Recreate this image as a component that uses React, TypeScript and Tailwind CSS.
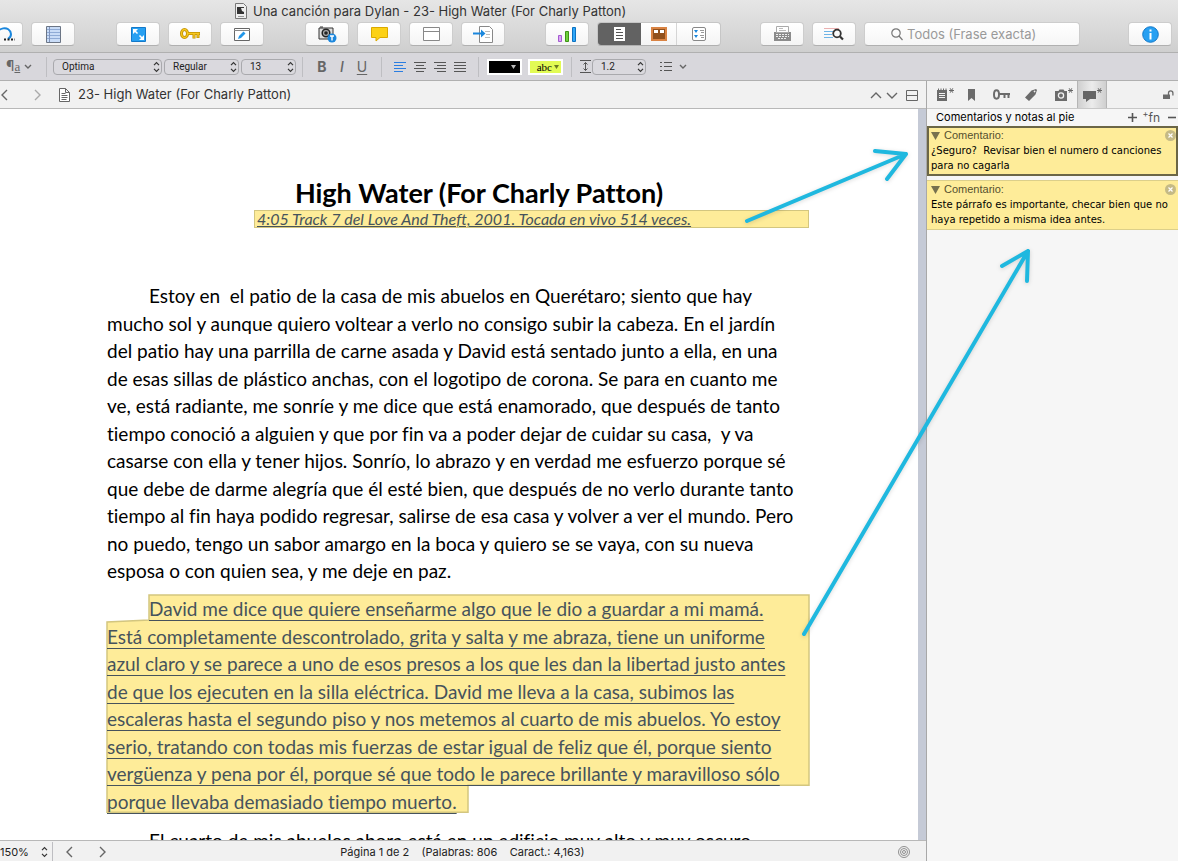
import type { ReactNode } from "react";

const ui = "font-['Inter',sans-serif]";
const body = "font-['Lato',sans-serif]";

interface ToolButtonProps {
  label: string;
  className?: string;
  children: ReactNode;
}

const ToolButton = ({ label, className = "", children }: ToolButtonProps) => {
  return (
    <button
      type="button"
      aria-label={label}
      className={`flex h-6 w-11 shrink-0 items-center justify-center rounded border border-[#cdcdcd] border-b-[#b0b0b0] bg-linear-to-b from-white to-[#f4f4f4] ${className}`}
    >
      {children}
    </button>
  );
};

interface PickerProps {
  label: string;
  value: string;
  className: string;
}

const Picker = ({ label, value, className }: PickerProps) => {
  return (
    <div className={`relative h-4 shrink-0 ${className}`}>
      <select
        aria-label={label}
        defaultValue={value}
        className="block h-4 w-full appearance-none rounded border border-[#a9a9ad] bg-[#dad9de] pl-2 font-['Roboto',sans-serif] text-[10px] leading-3 text-[#222]"
      >
        <option>{value}</option>
      </select>
      <Stepper className="pointer-events-none absolute top-0.5 right-0.5" />
    </div>
  );
};

const Stepper = ({ className = "" }: { className?: string }) => (
  <svg className={className} width="7" height="12" viewBox="0 0 7 12" fill="none" stroke="#333" strokeWidth="1.2">
    <path d="M1 4.2 3.5 1.7 6 4.2M1 7.8 3.5 10.3 6 7.8" />
  </svg>
);

const Chevron = ({ d, w = 9, h = 14, color = "#666" }: { d: string; w?: number; h?: number; color?: string }) => (
  <svg width={w} height={h} viewBox={`0 0 ${w} ${h}`} fill="none" stroke={color} strokeWidth="1.4">
    <path d={d} />
  </svg>
);

const Toolbar = () => {
  return (
    <div className="flex items-center overflow-hidden pr-1.5">
      <div className="-ml-[21px] flex gap-2">
        <ToolButton label="Ver">
          <svg width="36" height="18" viewBox="0 0 36 18" fill="none">
            <path d="M13 12c0-10 14-12 15-3 0 3-1 4-3 5" stroke="#1b87dd" strokeWidth="2" />
            <path d="M21 14.500h11" stroke="#222" strokeWidth="2" strokeDasharray="2 1.500" />
          </svg>
        </ToolButton>
        <ToolButton label="Carpeta">
          <svg width="15" height="17" viewBox="0 0 15 17">
            <path d="M.5.5h14v16H.5z" fill="#c9dcf7" stroke="#6b7585" />
            <path d="M1 3.500h13M1 6.500h13M1 9.500h13M1 12.500h13" stroke="#8fabd6" />
            <path d="M3.500 1v15" stroke="#8095bd" />
          </svg>
        </ToolButton>
      </div>
      <div className="ml-[41px] flex gap-2">
        <ToolButton label="Pantalla completa">
          <svg width="15" height="15" viewBox="0 0 15 15">
            <path d="M.5.5h14v14H.5z" fill="#27a0f2" stroke="#1479c9" />
            <path d="m4 4 2.500 2.500M8.500 8.500 11 11" stroke="#fff" strokeWidth="1.500" />
            <path d="M2 2h5L2 7zM13 13H8l5-5z" fill="#fff" />
          </svg>
        </ToolButton>
        <ToolButton label="Palabras clave">
          <svg width="20" height="12" viewBox="0 0 20 12" fill="none">
            <g stroke="#c08f00" strokeWidth="3">
              <ellipse cx="4.500" cy="5.500" rx="3" ry="4" />
              <path d="M7.500 5.500H20M14 6v4.500M18 6v4" />
            </g>
            <g stroke="#f7c81e" strokeWidth="1.300">
              <ellipse cx="4.500" cy="5.500" rx="3" ry="4" />
              <path d="M8 5.500h11.500M14 6v4M18 6v3.500" />
            </g>
          </svg>
        </ToolButton>
        <ToolButton label="Editar">
          <svg width="17" height="15" viewBox="0 0 17 15">
            <path d="M.5 1.500h15v12H.5z" fill="#fff" stroke="#666" />
            <path d="M0 3.500h16" stroke="#888" />
            <path d="m4 12 1-3 4.500-4.500 2 2L7 11z" fill="#2196e8" />
          </svg>
        </ToolButton>
      </div>
      <div className="ml-[41px] flex gap-2">
        <ToolButton label="Instantánea">
          <svg width="19" height="17" viewBox="0 0 19 17">
            <path d="M1 2h14v11H1z" fill="#ddd" stroke="#333" />
            <path d="M2 1h3" stroke="#333" />
            <circle cx="8" cy="7" r="3.800" fill="#aaa" stroke="#222" strokeWidth="1.500" />
            <circle cx="8" cy="7" r="1.800" fill="#222" />
            <circle cx="14" cy="12" r="4.500" fill="#1b87dd" />
            <path d="M12 10h4M14 10v4.500" stroke="#fff" strokeWidth="1.400" />
          </svg>
        </ToolButton>
        <ToolButton label="Comentario">
          <svg width="17" height="16" viewBox="0 0 17 16">
            <path d="M.5 1.500h16v10H9L5 15v-3.500H.5z" fill="#fcd116" stroke="#dba900" />
          </svg>
        </ToolButton>
        <ToolButton label="Ventana">
          <svg width="17" height="15" viewBox="0 0 17 15">
            <path d="M.5.5h16v13H.5z" fill="#fff" stroke="#888" />
            <path d="M0 4.500h17" stroke="#888" />
          </svg>
        </ToolButton>
        <ToolButton label="Importar">
          <svg width="20" height="17" viewBox="0 0 20 17">
            <path d="M6.500.5h10l3 3v13h-13z" fill="#fff" stroke="#888" />
            <path d="M12 5.500h5M13 8.500h4M12 11.500h5" stroke="#bbb" />
            <path d="M0 7.500h10" stroke="#1b87dd" strokeWidth="2" />
            <path d="m8 3.500 4.500 4-4.500 4z" fill="#1b87dd" />
          </svg>
        </ToolButton>
      </div>
      <div className="ml-10 flex gap-2">
        <ToolButton label="Estadísticas">
          <svg width="19" height="15" viewBox="0 0 19 15">
            <path d="M.5 8.500h3v6h-3z" fill="#dba6f5" stroke="#a45bd0" />
            <path d="M7.500 4.500h3v10h-3z" fill="#6fcf3c" stroke="#3d9414" />
            <path d="M14.500.5h3v14h-3z" fill="#2fa6f7" stroke="#0c72c2" />
          </svg>
        </ToolButton>
        <div className="flex w-[124px] shrink-0 overflow-hidden rounded border border-[#c6c6c6] border-b-[#b0b0b0] bg-linear-to-b from-white to-[#f4f4f4]">
          <button type="button" aria-label="Documento" className="flex w-[43px] items-center justify-center bg-[#626262]">
            <svg width="11" height="14" viewBox="0 0 11 14">
              <path d="M0 0h11v14H0z" fill="#fff" />
              <path d="M2 2.500h5M2 5.500h7M2 8.500h7M2 11.500h7" stroke="#555" />
            </svg>
          </button>
          <button type="button" aria-label="Corcho" className="flex w-9 items-center justify-center border-r border-[#d5d5d5]">
            <svg width="16" height="14" viewBox="0 0 16 14">
              <path d="M1 1h14v12H1z" fill="#91501c" stroke="#d98343" strokeWidth="2" />
              <path d="M3 3h4v3H3zM9 3h4v3H9z" fill="#fff" />
            </svg>
          </button>
          <button type="button" aria-label="Esquema" className="flex flex-1 items-center justify-center">
            <svg width="14" height="14" viewBox="0 0 14 14">
              <rect x=".5" y=".5" width="13" height="13" rx="1.500" fill="#fff" stroke="#888" />
              <path d="M2 3h4L4 6zM2 8h4l-2 3z" fill="#1b87dd" />
              <path d="M8 3.500h4M9 5.500h3M8 8.500h4M9 10.500h3" stroke="#999" />
            </svg>
          </button>
        </div>
      </div>
      <div className="ml-[39px] flex gap-2">
        <ToolButton label="Imprimir">
          <svg width="17" height="16" viewBox="0 0 17 16">
            <path d="M0 6h17v9H0z" fill="#8b8b8b" />
            <path d="M2.500.5h12v6h-12z" fill="#fff" stroke="#aaa" />
            <path d="M5 2.500h4M5 4.500h7" stroke="#bbb" />
            <path d="M2 8.500h13M2 10.500h13M4 12.500h9" stroke="#eee" strokeDasharray="2 1" />
          </svg>
        </ToolButton>
        <ToolButton label="Buscar en proyecto">
          <svg width="20" height="14" viewBox="0 0 20 14" fill="none">
            <path d="M0 1.500h15" stroke="#eab0b0" />
            <path d="M0 4.500h9M0 7.500h8M0 10.500h9" stroke="#6fb4e6" />
            <g stroke="#333">
              <circle cx="13" cy="6.500" r="3.800" strokeWidth="1.800" />
              <path d="m16 9.500 3 3" strokeWidth="2.200" />
            </g>
          </svg>
        </ToolButton>
      </div>
      <div className="ml-2 flex h-6 min-w-0 flex-1 items-center gap-1 rounded border border-[#cdcdcd] border-b-[#b0b0b0] bg-linear-to-b from-white to-[#f6f6f6] pl-[26px]">
        <svg width="12" height="13" viewBox="0 0 12 13" fill="none" stroke="#777" strokeWidth="1.200">
          <circle cx="5" cy="5" r="4.200" />
          <path d="m8 8 3.500 4" />
        </svg>
        <input
          type="search"
          aria-label="Buscar"
          placeholder="Todos (Frase exacta)"
          className="min-w-0 flex-1 text-[13px] leading-4 outline-none placeholder:text-[#999]"
        />
      </div>
      <ToolButton label="Inspector" className="ml-12">
        <svg width="17" height="17" viewBox="0 0 17 17">
          <circle cx="8.500" cy="8.500" r="7.800" fill="#27a0f2" stroke="#1479c9" />
          <path d="M8.500 3.500v2M8.500 7v6.500" stroke="#fff" strokeWidth="2" />
        </svg>
      </ToolButton>
    </div>
  );
};

const alignments = [
  { label: "Izquierda", d: "M0 .5h12M0 3.500h9M0 6.500h12M0 9.500h9", color: "#2a7de1" },
  { label: "Centro", d: "M0 .5h12M2 3.500h8M0 6.500h12M2 9.500h8", color: "#555" },
  { label: "Derecha", d: "M0 .5h12M3 3.500h9M0 6.500h12M3 9.500h9", color: "#555" },
  { label: "Justificado", d: "M0 .5h12M0 3.500h12M0 6.500h12M0 9.500h12", color: "#555" },
];

const Divider = ({ className = "" }: { className?: string }) => (
  <div className={`h-5 w-px shrink-0 bg-[#bebec2] ${className}`} />
);

const FormatBar = () => {
  return (
    <div className="flex h-[29px] shrink-0 items-center border-y border-[#b0b0b0] bg-[#d8d7dc] pl-1.5 text-[#666]">
      <button type="button" aria-label="Estilos" className="flex w-7 shrink-0 items-center gap-1 text-sm leading-4">
        <span>¶<span className="font-['Liberation_Serif',serif] text-[13px] underline">a</span></span>
        <Chevron d="M1 2l3 3 3-3" w={8} h={7} />
      </button>
      <Divider className="mx-3 mr-1.5" />
      <Picker label="Fuente" value="Optima" className="w-[109px]" />
      <Picker label="Variante" value="Regular" className="ml-0.5 w-[75px]" />
      <Picker label="Tamaño" value="13" className="ml-0.5 w-[55px]" />
      <Divider className="ml-1.5" />
      <div className="flex w-[78px] shrink-0 items-center justify-center text-sm leading-4">
        <button type="button" className="w-5 font-bold">B</button>
        <button type="button" className="w-5 font-medium italic">I</button>
        <button type="button" className="w-5 underline underline-offset-2">U</button>
      </div>
      <Divider />
      <div className="flex w-24 shrink-0 items-center justify-center gap-2">
        {alignments.map((a) => (
          <button key={a.label} type="button" aria-label={a.label}>
            <svg width="12" height="10" viewBox="0 0 12 10" stroke={a.color}>
              <path d={a.d} />
            </svg>
          </button>
        ))}
      </div>
      <Divider />
      <button type="button" aria-label="Color de texto" className="ml-2 flex h-4 w-[35px] shrink-0 items-center justify-end border-2 border-white bg-black pr-1">
        <svg width="5" height="4" viewBox="0 0 5 4" fill="#bbb"><path d="M0 0h5L2.500 4z" /></svg>
      </button>
      <button type="button" className="ml-1.5 flex h-4 w-[35px] shrink-0 items-center justify-end gap-0.5 border-2 border-white bg-[#e2fb54] pr-0.5 font-['Liberation_Serif',serif] text-[11px] leading-3 text-black">
        abc
        <svg width="5" height="4" viewBox="0 0 5 4" fill="#6c7a20"><path d="M0 0h5L2.500 4z" /></svg>
      </button>
      <Divider className="ml-2" />
      <svg className="ml-2 shrink-0" width="11" height="13" viewBox="0 0 11 13" fill="none" stroke="#555">
        <path d="M0 .5h11M0 12.500h11M5.500 2.500v8M3.500 4.500l2-2 2 2M3.500 8.500l2 2 2-2" />
      </svg>
      <Picker label="Interlineado" value="1.2" className="ml-px w-[54px]" />
      <button type="button" aria-label="Lista" className="ml-3.5 flex items-center gap-1.5">
        <svg width="13" height="11" viewBox="0 0 13 11" stroke="#555">
          <path d="M0 1.500h2M0 5.500h2M0 9.500h2M4 1.500h8M4 5.500h8M4 9.500h8" />
        </svg>
        <Chevron d="M1 2l3 3 3-3" w={8} h={7} />
      </button>
    </div>
  );
};

const firstParagraph = [
  "Estoy en  el patio de la casa de mis abuelos en Querétaro; siento que hay",
  "mucho sol y aunque quiero voltear a verlo no consigo subir la cabeza. En el jardín",
  "del patio hay una parrilla de carne asada y David está sentado junto a ella, en una",
  "de esas sillas de plástico anchas, con el logotipo de corona. Se para en cuanto me",
  "ve, está radiante, me sonríe y me dice que está enamorado, que después de tanto",
  "tiempo conoció a alguien y que por fin va a poder dejar de cuidar su casa,  y va",
  "casarse con ella y tener hijos. Sonrío, lo abrazo y en verdad me esfuerzo porque sé",
  "que debe de darme alegría que él esté bien, que después de no verlo durante tanto",
  "tiempo al fin haya podido regresar, salirse de esa casa y volver a ver el mundo. Pero",
  "no puedo, tengo un sabor amargo en la boca y quiero se se vaya, con su nueva",
  "esposa o con quien sea, y me deje en paz.",
];

const secondParagraph = [
  "David me dice que quiere enseñarme algo que le dio a guardar a mi mamá.",
  "Está completamente descontrolado, grita y salta y me abraza, tiene un uniforme",
  "azul claro y se parece a uno de esos presos a los que les dan la libertad justo antes",
  "de que los ejecuten en la silla eléctrica. David me lleva a la casa, subimos las",
  "escaleras hasta el segundo piso y nos metemos al cuarto de mis abuelos. Yo estoy",
  "serio, tratando con todas mis fuerzas de estar igual de feliz que él, porque siento",
  "vergüenza y pena por él, porque sé que todo le parece brillante y maravilloso sólo",
  "porque llevaba demasiado tiempo muerto.",
];

const Page = () => {
  return (
    <main className="min-h-0 flex-1 overflow-hidden border-r-8 border-[#c5cad6] bg-white">
      <article className={`ml-[107px] w-[702px] pt-[66px] text-[19px] leading-[1.45] text-black [font-variant-ligatures:none] ${body}`}>
        <h1 className="pl-[42px] text-center text-[27px] leading-[35px] font-bold whitespace-nowrap">
          High Water (For Charly Patton)
        </h1>
        <p className="ml-[147px] h-[18px] border border-[#d3c67f] bg-[#feec99] pl-0.5 text-base leading-4 whitespace-nowrap text-[#46535c] italic underline decoration-1">
          4:05 Track 7 del Love And Theft, 2001. Tocada en vivo 514 veces.
        </p>
        <p className="mt-[54px] indent-[42px] whitespace-pre">{firstParagraph.join("\n")}</p>
        <div className="relative mt-2.5">
          <svg className="absolute inset-0 h-full w-full overflow-visible" viewBox="0 0 702 220" preserveAspectRatio="none">
            <path d="M42 0H702V190H361V217H0V27L42 25Z" fill="#feec99" stroke="#d3c67f" strokeWidth="1.500" />
          </svg>
          <p className="relative indent-[42px] whitespace-pre text-[#46535c] underline decoration-1 underline-offset-4">
            {secondParagraph.join("\n")}
          </p>
        </div>
        <p className="mt-3 indent-[42px] whitespace-pre">
          El cuarto de mis abuelos ahora está en un edificio muy alto y muy oscuro
        </p>
      </article>
    </main>
  );
};

const Editor = () => {
  return (
    <section className="flex min-w-0 flex-1 flex-col">
      <header className="flex h-7 shrink-0 items-center border-b border-[#b8b8b8] bg-[#f1f1f1] pt-px pr-2 text-[13px] text-[#333]">
        <button type="button" aria-label="Atrás"><Chevron d="M7 2 2 7l5 5" /></button>
        <button type="button" aria-label="Adelante" className="ml-6"><Chevron d="M2 2l5 5-5 5" color="#aaa" /></button>
        <svg className="mr-2 ml-[17px]" width="11" height="14" viewBox="0 0 11 14" fill="#fff" stroke="#666">
          <path d="M.5.5h6l4 4v9H.5zM6.500.5v4h4" />
          <path d="M2.500 5.500h4M2.500 7.500h6M2.500 9.500h6M2.500 11.500h5" />
        </svg>
        <h2 className="flex-1 whitespace-nowrap">23- High Water (For Charly Patton)</h2>
        <button type="button" aria-label="Anterior"><Chevron d="M1 7l5-5 5 5" w={12} h={9} /></button>
        <button type="button" aria-label="Siguiente" className="ml-1"><Chevron d="M1 2l5 5 5-5" w={12} h={9} /></button>
        <button type="button" aria-label="Dividir" className="ml-2">
          <svg width="12" height="11" viewBox="0 0 12 11" fill="none" stroke="#666">
            <path d="M.5.5h11v10H.5zM.5 5.500h11" />
          </svg>
        </button>
      </header>
      <Page />
      <footer className="relative flex h-[21px] shrink-0 items-center border-t border-[#b8b8b8] bg-[#f1f1f1] pt-0.5 pr-4 text-[11px] text-[#222]">
        <button type="button" className="flex items-center gap-3">
          150%
          <Stepper />
        </button>
        <Divider className="ml-1" />
        <button type="button" aria-label="Página anterior" className="ml-3"><Chevron d="M7 2 2 7l5 5" /></button>
        <button type="button" aria-label="Página siguiente" className="ml-6"><Chevron d="M2 2l5 5-5 5" /></button>
        <p className="flex-1 pr-20 text-center whitespace-pre">Página 1 de 2    (Palabras: 806    Caract.: 4,163)</p>
        <svg width="12" height="12" viewBox="0 0 12 12" fill="none" stroke="#777" strokeWidth=".8">
          <circle cx="6" cy="6" r="5.500" />
          <circle cx="6" cy="6" r="3.500" />
          <circle cx="6" cy="6" r="1.500" />
        </svg>
      </footer>
    </section>
  );
};

interface CommentProps {
  text: string;
  className: string;
}

const Comment = ({ text, className }: CommentProps) => {
  return (
    <article className={`bg-[#feec99] text-black ${className}`}>
      <header className="flex h-[15px] items-center gap-1 font-['Liberation_Sans',sans-serif] text-[11px] text-[#55502f]">
        <svg width="9" height="8" viewBox="0 0 9 8" fill="#77714e"><path d="M0 0h9L4.500 8z" /></svg>
        <h3 className="flex-1">Comentario:</h3>
        <button type="button" aria-label="Eliminar comentario">
          <svg width="11" height="11" viewBox="0 0 11 11">
            <circle cx="5.500" cy="5.500" r="5.500" fill="#c5ba86" />
            <path d="m3.500 3.500 4 4M7.500 3.500l-4 4" stroke="#fff" strokeWidth="1.200" />
          </svg>
        </button>
      </header>
      <p className="font-['DejaVu_Sans',sans-serif] text-[10px] leading-[15px] whitespace-pre">{text}</p>
    </article>
  );
};

const Star = () => <path d="M0 3.500h5M1.200 1.300l2.600 4.400M3.800 1.300 1.200 5.700" stroke="#666" />;

const Sidebar = () => {
  return (
    <aside className="flex w-[252px] shrink-0 flex-col overflow-hidden border-l border-[#a8a8a8] bg-[#f6f6f6]">
      <nav className="flex h-7 shrink-0 items-center border-b border-[#c8c8c8] bg-[#f1f1f1] pl-[9px]">
        <button type="button" aria-label="Notas" className="w-8">
          <svg width="18" height="14" viewBox="0 0 18 14" fill="none">
            <path d="M1 2h10v11H1z" fill="#6b6b6b" />
            <path d="M2.500.5v2M5 .5v2M7.500 .5v2M10 .5v2" stroke="#6b6b6b" />
            <path d="M3 5.500h6M3 7.500h6M3 9.500h6" stroke="#f1f1f1" />
            <g transform="translate(13 -1)"><Star /></g>
          </svg>
        </button>
        <button type="button" aria-label="Marcadores" className="w-[25px]">
          <svg width="7" height="12" viewBox="0 0 7 12" fill="#6b6b6b"><path d="M0 0h7v12L3.500 9 0 12z" /></svg>
        </button>
        <button type="button" aria-label="Claves" className="w-8">
          <svg width="17" height="11" viewBox="0 0 17 11" fill="none" stroke="#6b6b6b" strokeWidth="2">
            <ellipse cx="3.500" cy="5.500" rx="2.500" ry="4.200" />
            <path d="M6 5h11M11.500 5v4M15.500 5v4" />
          </svg>
        </button>
        <button type="button" aria-label="Etiquetas" className="w-[30px]">
          <svg width="12" height="12" viewBox="0 0 12 12" fill="#6b6b6b">
            <path fillRule="evenodd" d="M6.500 1.500 11 0l1 1-1.500 4.500L4 12 0 8.500zM9.500 1.500a.9.9 0 1 0 .1 0z" />
          </svg>
        </button>
        <button type="button" aria-label="Instantáneas" className="w-[22px]">
          <svg width="19" height="14" viewBox="0 0 19 14" fill="none">
            <path d="M0 3h3.500l1-1.500h4L9.500 3H12v10H0z" fill="#6b6b6b" />
            <circle cx="6" cy="7.500" r="2.600" stroke="#f1f1f1" strokeWidth="1.300" />
            <g transform="translate(13 -1)"><Star /></g>
          </svg>
        </button>
        <button type="button" aria-label="Comentarios" aria-pressed="true" className="flex h-full w-[30px] items-center justify-center border-x border-[#b5b5b5] bg-linear-to-r from-[#cfcfcf] via-[#ececec] to-[#cfcfcf]">
          <svg width="19" height="14" viewBox="0 0 19 14" fill="none">
            <path d="M0 3h13v8H7l-4 3v-3H0z" fill="#666" />
            <g transform="translate(14 -1)"><Star /></g>
          </svg>
        </button>
        <button type="button" aria-label="Bloquear" className="mr-1 ml-auto">
          <svg width="11" height="10" viewBox="0 0 11 10" fill="none">
            <path d="M0 4.500h7V9H0z" fill="#6b6b6b" />
            <path d="M5.500 5V3a2.200 2.200 0 0 1 4.400 0v2.500" stroke="#6b6b6b" strokeWidth="1.300" />
          </svg>
        </button>
      </nav>
      <header className="flex h-[17px] shrink-0 items-center pr-0.5 pl-[9px] text-[11px] text-black">
        <h2 className="flex-1">Comentarios y notas al pie</h2>
        <button type="button" aria-label="Añadir comentario">
          <svg width="9" height="9" viewBox="0 0 9 9" stroke="#555" strokeWidth="1.600"><path d="M0 4.500h9M4.500 0v9" /></svg>
        </button>
        <button type="button" aria-label="Añadir nota al pie" className="ml-1.5 flex text-xs text-[#555]">
          <span className="text-[9px] leading-2">+</span>fn
        </button>
        <button type="button" aria-label="Quitar" className="ml-2">
          <svg width="8" height="9" viewBox="0 0 8 9" stroke="#555" strokeWidth="1.600"><path d="M0 4.500h8" /></svg>
        </button>
      </header>
      <Comment
        className="border-2 border-[#6b6646] pb-px pl-0.5"
        text={"¿Seguro?  Revisar bien el numero d canciones\npara no cagarla"}
      />
      <Comment
        className="mt-1 border-y border-[#dccf8a] pt-px pr-0.5 pb-0.5 pl-1"
        text={"Este párrafo es importante, checar bien que no\nhaya repetido a misma idea antes."}
      />
    </aside>
  );
};

const App = () => {
  return (
    <div className={`relative flex h-screen flex-col overflow-hidden bg-white ${ui}`}>
      <div className="flex h-[52px] shrink-0 flex-col bg-linear-to-b from-[#e6e6e6] to-[#cfcfcf]">
        <div className="flex h-[22px] shrink-0 items-center gap-1.5 pl-[235px] text-[13px] leading-4 text-[#333]">
          <svg width="12" height="16" viewBox="0 0 12 16">
            <path d="M.5.5h8l3 3v12H.5z" fill="#eee" stroke="#777" />
            <path d="M2 4h7v7H2z" fill="#333" />
            <path d="M6 5h3v4L7 8z" fill="#eee" />
            <path d="M3 13.500h6" stroke="#999" />
          </svg>
          <h1 className="whitespace-nowrap">Una canción para Dylan - 23- High Water (For Charly Patton)</h1>
        </div>
        <Toolbar />
      </div>
      <FormatBar />
      <div className="flex min-h-0 flex-1">
        <Editor />
        <Sidebar />
      </div>
      <svg
        className="pointer-events-none absolute top-0 left-0 drop-shadow-sm"
        width="1178"
        height="861"
        viewBox="0 0 1178 861"
        fill="none"
        stroke="#1fb8df"
        strokeWidth="4"
        strokeLinecap="round"
        strokeLinejoin="round"
      >
        <path d="M747 221 906 154M875 151l31 3-19 25" />
        <path d="M804 634 1028 251M1002 266l26-15-1 30" />
      </svg>
    </div>
  );
};

export default App;
